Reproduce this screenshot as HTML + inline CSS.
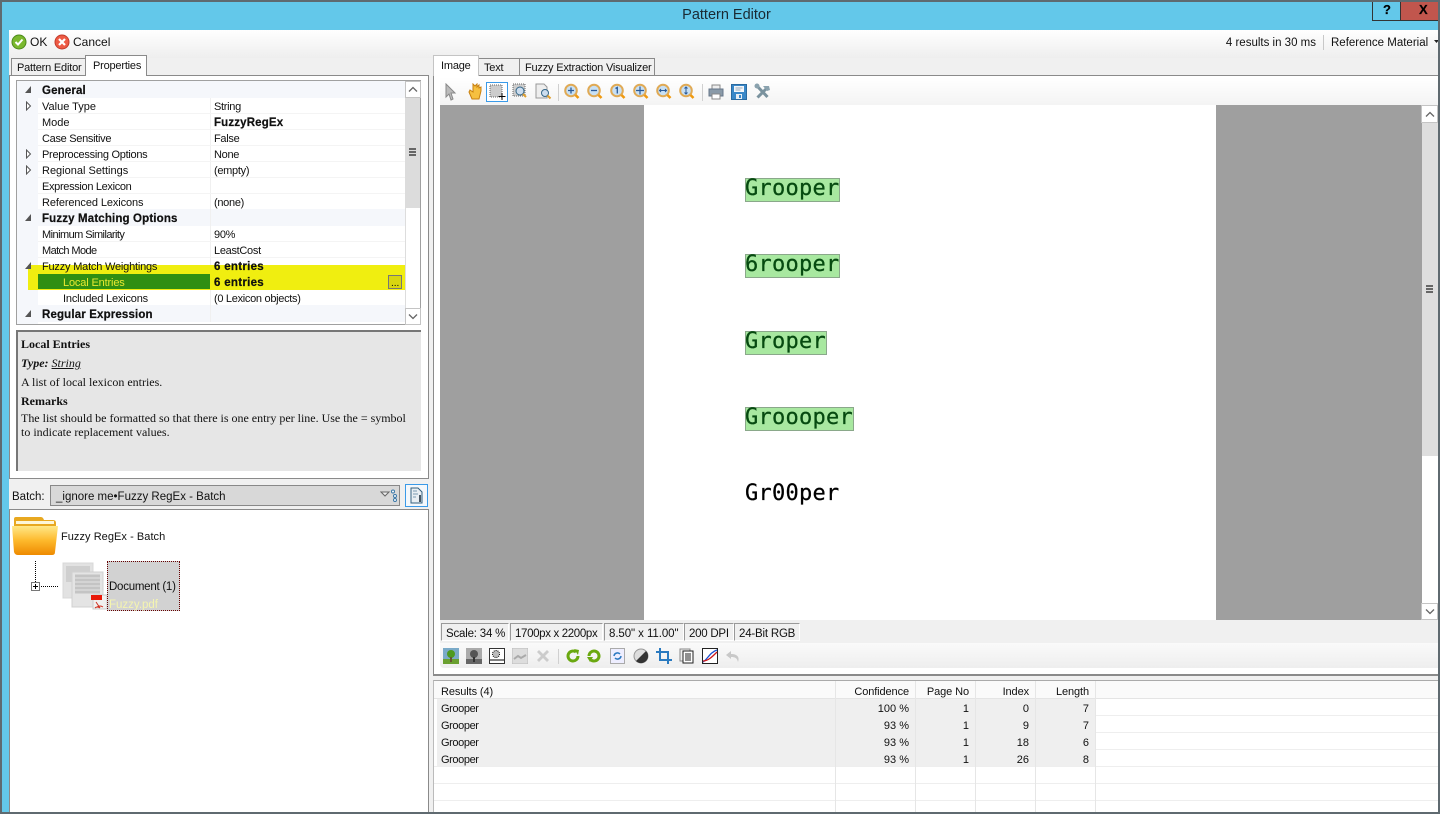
<!DOCTYPE html>
<html><head><meta charset="utf-8"><style>
html,body{margin:0;padding:0;width:1440px;height:814px;overflow:hidden;background:#fff}
body{position:relative;font-family:"Liberation Sans",sans-serif;font-size:11px;color:#111}
.b,.t,svg{position:absolute}
.t{white-space:nowrap;line-height:14px;height:14px}
.r{text-align:right}
.v{letter-spacing:-.3px}
.bd{font-weight:bold;-webkit-text-stroke:.2px #000;letter-spacing:.15px}
.s{font-family:"Liberation Serif",serif;font-size:12px}
.mono{font-family:"DejaVu Sans Mono",monospace;font-size:22px;line-height:26px;height:26px;color:#000;letter-spacing:.25px;-webkit-text-stroke:.25px currentColor}
.hl{color:#064a10}
.sb{height:18px;background:#f0f0f0;border-top:1px solid #999;border-left:1px solid #999;border-right:1px solid #fff;border-bottom:1px solid #fff;box-sizing:border-box}
</style></head><body>
<!-- window frame -->
<div class="b" style="left:0;top:0;width:1440px;height:814px;background:#63c8ea"></div>
<div class="b" style="left:9px;top:30px;width:1429px;height:782px;background:#f0f0f0"></div>
<div class="b" style="left:0;top:0;width:1440px;height:2px;background:#5f6a70"></div>
<div class="b" style="left:0;top:0;width:2px;height:814px;background:#5f6a70"></div>
<div class="t" style="left:0;top:6px;width:1453px;text-align:center;font-size:14.500px;line-height:18px;height:18px;color:#1a2a33">Pattern Editor</div>
<!-- help close -->
<div class="b" style="left:1372px;top:2px;width:28px;height:18px;border-left:1px solid #333;background:#63c8ea;box-sizing:border-box"></div>
<div class="b" style="left:1400px;top:2px;width:38px;height:18px;background:#c1564d;border-left:1px solid #333;box-sizing:border-box"></div>
<div class="b" style="left:1372px;top:20px;width:66px;height:1px;background:#333"></div>
<div class="t bd" style="left:1383px;top:3px;font-size:13px;color:#000">?</div>
<div class="t bd" style="left:1419px;top:3px;font-size:13px;color:#000">X</div>
<!-- toolbar -->
<div class="b" style="left:9px;top:30px;width:1429px;height:28px;background:linear-gradient(#fff,#eee)"></div>
<svg style="left:11px;top:34px" width="16" height="16" viewBox="0 0 16 16"><circle cx="8" cy="8" r="7" fill="#7ab82e" stroke="#4c8a1a"/><path d="M4.500 8l2.500 2.500 4.500-5" stroke="#fff" stroke-width="2" fill="none"/></svg>
<div class="t" style="left:30px;top:35px;font-size:12px">OK</div>
<svg style="left:54px;top:34px" width="16" height="16" viewBox="0 0 16 16"><circle cx="8" cy="8" r="7" fill="#ee5a44" stroke="#c23a2a"/><path d="M5 5l6 6M11 5l-6 6" stroke="#fff" stroke-width="2.200"/></svg>
<div class="t" style="left:73px;top:35px;font-size:12px">Cancel</div>
<div class="t r" style="right:124px;top:36px;font-size:11.500px">4 results in 30 ms</div>
<div class="b" style="left:1323px;top:35px;width:1px;height:15px;background:#c8c8c8"></div>
<div class="t" style="left:1331px;top:36px;font-size:11.500px">Reference Material</div>
<svg style="left:1434px;top:40px" width="5" height="4"><path d="M0 0h5L2.500 3z" fill="#222"/></svg>

<!-- left panel -->
<div class="b" style="left:9px;top:75px;width:420px;height:404px;background:#fff;border:1px solid #8a8a8a;box-sizing:border-box"></div>
<div class="b" style="left:11px;top:58px;width:75px;height:17px;background:#f0f0f0;border:1px solid #8a8a8a;border-bottom:0;box-sizing:border-box"></div>
<div class="t" style="left:17px;top:61px;font-size:11px;letter-spacing:-.2px">Pattern Editor</div>
<div class="b" style="left:85px;top:55px;width:62px;height:21px;background:#fff;border:1px solid #8a8a8a;border-bottom:0;box-sizing:border-box"></div>
<div class="t" style="left:93px;top:59px;font-size:11px;letter-spacing:-.2px">Properties</div>
<!-- property grid -->
<div class="b" style="left:16px;top:80px;width:405px;height:245px;background:#fff;border:1px solid #a0a0a0;box-sizing:border-box"></div>
<div class="b" style="left:17px;top:81px;width:21px;height:243px;background:#f5f7fb"></div>
<div class="b" style="left:17px;top:81px;width:388px;height:17px;background:#f5f7fb"></div>
<div class="b" style="left:17px;top:209px;width:388px;height:17px;background:#f5f7fb"></div>
<div class="b" style="left:17px;top:305px;width:388px;height:17px;background:#f5f7fb"></div>
<div class="b" style="left:210px;top:98px;width:1px;height:224px;background:#f0f0f0"></div>
<div class="b" style="left:38px;top:113px;width:367px;height:1px;background:#f4f4f4"></div>
<div class="b" style="left:38px;top:129px;width:367px;height:1px;background:#f4f4f4"></div>
<div class="b" style="left:38px;top:145px;width:367px;height:1px;background:#f4f4f4"></div>
<div class="b" style="left:38px;top:161px;width:367px;height:1px;background:#f4f4f4"></div>
<div class="b" style="left:38px;top:177px;width:367px;height:1px;background:#f4f4f4"></div>
<div class="b" style="left:38px;top:193px;width:367px;height:1px;background:#f4f4f4"></div>
<div class="b" style="left:38px;top:241px;width:367px;height:1px;background:#f4f4f4"></div>
<div class="b" style="left:38px;top:257px;width:367px;height:1px;background:#f4f4f4"></div>
<!-- yellow highlight -->
<div class="b" style="left:28px;top:265px;width:381px;height:25px;background:#f0ee10"></div>
<div class="b" style="left:38px;top:274px;width:172px;height:15px;background:#308f12"></div>
<div class="b" style="left:388px;top:275px;width:14px;height:14px;background:#d8d610;border:1px solid #777;box-sizing:border-box"></div>
<div class="t" style="left:391px;top:277px;font-size:10px;color:#000">...</div>
<!-- prop text -->
<div class="b" style="left:0;top:1px">
<div class="t bd" style="left:42px;top:83px;font-size:11.500px">General</div>
<div class="t" style="left:42px;top:99px">Value Type</div><div class="t v" style="left:214px;top:99px">String</div>
<div class="t" style="left:42px;top:115px">Mode</div><div class="t bd" style="left:214px;top:115px;font-size:11.500px">FuzzyRegEx</div>
<div class="t" style="left:42px;top:131px;letter-spacing:-.3px">Case Sensitive</div><div class="t v" style="left:214px;top:131px">False</div>
<div class="t" style="left:42px;top:147px;letter-spacing:-.28px">Preprocessing Options</div><div class="t v" style="left:214px;top:147px">None</div>
<div class="t" style="left:42px;top:163px">Regional Settings</div><div class="t v" style="left:214px;top:163px">(empty)</div>
<div class="t" style="left:42px;top:179px;letter-spacing:-.33px">Expression Lexicon</div>
<div class="t" style="left:42px;top:195px;letter-spacing:-.1px">Referenced Lexicons</div><div class="t v" style="left:214px;top:195px">(none)</div>
<div class="t bd" style="left:42px;top:211px;font-size:11.500px">Fuzzy Matching Options</div>
<div class="t" style="left:42px;top:227px;letter-spacing:-.55px">Minimum Similarity</div><div class="t v" style="left:214px;top:227px">90%</div>
<div class="t" style="left:42px;top:243px;letter-spacing:-.6px">Match Mode</div><div class="t v" style="left:214px;top:243px">LeastCost</div>
<div class="t" style="left:42px;top:259px;letter-spacing:-.2px">Fuzzy Match Weightings</div><div class="t bd" style="left:214px;top:259px;font-size:11.500px;letter-spacing:.3px">6 entries</div>
<div class="t" style="left:63px;top:275px;color:#e8e830;letter-spacing:-.15px">Local Entries</div><div class="t bd" style="left:214px;top:275px;font-size:11.500px;letter-spacing:.3px">6 entries</div>
<div class="t" style="left:63px;top:291px;letter-spacing:-.18px">Included Lexicons</div><div class="t v" style="left:214px;top:291px">(0 Lexicon objects)</div>
<div class="t bd" style="left:42px;top:307px;font-size:11.500px">Regular Expression</div>
</div>
<!-- arrows -->
<svg style="left:24px;top:85px" width="10" height="10"><path d="M7 1v7H1z" fill="#555"/></svg>
<svg style="left:24px;top:213px" width="10" height="10"><path d="M7 1v7H1z" fill="#555"/></svg>
<svg style="left:24px;top:261px" width="10" height="10"><path d="M7 1v7H1z" fill="#555"/></svg>
<svg style="left:24px;top:309px" width="10" height="10"><path d="M7 1v7H1z" fill="#555"/></svg>
<svg style="left:25px;top:101px" width="8" height="10"><path d="M1.500 1l4 4-4 4z" fill="#fff" stroke="#555"/></svg>
<svg style="left:25px;top:149px" width="8" height="10"><path d="M1.500 1l4 4-4 4z" fill="#fff" stroke="#555"/></svg>
<svg style="left:25px;top:165px" width="8" height="10"><path d="M1.500 1l4 4-4 4z" fill="#fff" stroke="#555"/></svg>
<!-- grid scrollbar -->
<div class="b" style="left:405px;top:81px;width:15px;height:243px;background:#fff;border-left:1px solid #ddd;box-sizing:border-box"></div>
<div class="b" style="left:405px;top:98px;width:15px;height:110px;background:#dcdcdc"></div>
<div class="b" style="left:405px;top:81px;width:16px;height:17px;background:#fff;border:1px solid #c4c4c4;box-sizing:border-box"></div>
<div class="b" style="left:405px;top:308px;width:16px;height:17px;background:#fff;border:1px solid #c4c4c4;box-sizing:border-box"></div>
<svg style="left:408px;top:86px" width="10" height="7"><path d="M1 5.500l4-4 4 4" fill="none" stroke="#666" stroke-width="1.300"/></svg>
<svg style="left:408px;top:313px" width="10" height="7"><path d="M1 1.500l4 4 4-4" fill="none" stroke="#666" stroke-width="1.300"/></svg>
<div class="b" style="left:409px;top:148px;width:7px;height:1.500px;background:#666;box-shadow:0 3px 0 #666,0 6px 0 #666"></div>
<!-- description -->
<div class="b" style="left:16px;top:330px;width:405px;height:141px;background:#e6e6e6;border-top:2px solid #777;border-left:2px solid #777;box-sizing:border-box"></div>
<div class="t s" style="left:21px;top:337px;font-weight:bold">Local Entries</div>
<div class="t s" style="left:21px;top:356px"><b><i>Type:</i></b> <i><u>String</u></i></div>
<div class="t s" style="left:21px;top:375px">A list of local lexicon entries.</div>
<div class="t s" style="left:21px;top:394px;font-weight:bold">Remarks</div>
<div class="t s" style="left:21px;top:411px;letter-spacing:-.01px">The list should be formatted so that there is one entry per line. Use the = symbol</div>
<div class="t s" style="left:21px;top:425px">to indicate replacement values.</div>
<!-- batch row -->
<div class="t" style="left:12px;top:490px;font-size:11.500px">Batch:</div>
<div class="b" style="left:50px;top:485px;width:350px;height:21px;background:#d8d8d8;border:1px solid #888;box-sizing:border-box"></div>
<div class="t" style="left:56px;top:490px;font-size:11.500px">_ignore me•Fuzzy RegEx - Batch</div>
<svg style="left:380px;top:489px" width="18" height="14"><path d="M1 3h8L5 7z" fill="#eee" stroke="#666"/><circle cx="13" cy="2.500" r="1.500" fill="#fff" stroke="#3a78a8"/><circle cx="15" cy="7" r="1.500" fill="#fff" stroke="#3a78a8"/><circle cx="15" cy="11" r="1.500" fill="#fff" stroke="#3a78a8"/></svg>
<div class="b" style="left:405px;top:484px;width:23px;height:23px;background:#f4f8fc;border:1px solid #3a9ae8;box-sizing:border-box"></div>
<svg style="left:409px;top:487px" width="15" height="17"><path d="M2 1h7l4 4v11H2z" fill="#e8eef2" stroke="#34607e"/><path d="M4 4h4M4 7h5M4 10h3" stroke="#7a9ab0"/><path d="M11 8v7" stroke="#123" stroke-width="1.500"/></svg>
<!-- tree -->
<div class="b" style="left:9px;top:509px;width:420px;height:303px;background:#fff;border:1px solid #8a8a8a;border-bottom:0;box-sizing:border-box"></div>
<svg style="left:11px;top:515px" width="48" height="42" viewBox="0 0 48 42"><defs><linearGradient id="f" x1="0" y1="0" x2="0" y2="1"><stop offset="0" stop-color="#ffe888"/><stop offset=".5" stop-color="#fdb92c"/><stop offset="1" stop-color="#ee8a00"/></linearGradient></defs><path d="M3 4q0-2 2-2h25q2 0 3 3h9q3 0 3 3v10H3z" fill="#e8a820"/><rect x="5" y="6" width="38" height="3" fill="#fdf6d8"/><path d="M1 11h46l-3 26q0 3-3 3H7q-3 0-4-3z" fill="url(#f)"/></svg>
<div class="t" style="left:61px;top:530px;letter-spacing:.05px">Fuzzy RegEx - Batch</div>
<div class="b" style="left:35px;top:561px;height:21px;border-left:1px dotted #000"></div>
<div class="b" style="left:31px;top:582px;width:9px;height:9px;background:#fff;border:1px solid #777;box-sizing:border-box"></div>
<svg style="left:31px;top:582px" width="9" height="9"><path d="M2 4.500h5M4.500 2v5" stroke="#000"/></svg>
<div class="b" style="left:41px;top:586px;width:17px;border-top:1px dotted #000"></div>
<svg style="left:62px;top:562px" width="46" height="48"><rect x="1" y="1" width="30" height="35" fill="#e2e2e2" stroke="#d8d8d8"/><rect x="4" y="4" width="24" height="16" fill="#cfcfcf"/><rect x="10" y="10" width="31" height="35" fill="#e4e4e4" stroke="#d0d0d0"/><path d="M13 14h25M13 18h25M13 22h25M13 26h25M13 30h25" stroke="#c4c4c4" stroke-width="3"/><rect x="31" y="33" width="14" height="14" fill="#f0f0f0" stroke="#ccc"/><rect x="29" y="33" width="11" height="5" fill="#e81808"/><path d="M34 40q2 3 4 6M38 46q-3-2-5 0M35 45q3-2 6 0" stroke="#d03020" fill="none"/></svg>
<div class="b" style="left:107px;top:561px;width:73px;height:50px;background:#d2d2d2;border:1px dotted #600;box-sizing:border-box"></div>
<div class="t" style="left:109px;top:580px;font-size:11.500px;letter-spacing:-.25px">Document (1)</div>
<div class="t" style="left:109px;top:598px;font-size:11.500px;color:#f4f4b0">Fuzzy.pdf</div>

<!-- right panel -->
<div class="b" style="left:433px;top:75px;width:1005px;height:601px;background:#fff;border-top:1px solid #8a8a8a;border-left:1px solid #8a8a8a;border-bottom:2px solid #8a8a8a;box-sizing:border-box"></div>
<div class="b" style="left:478px;top:58px;width:42px;height:17px;background:#f0f0f0;border:1px solid #8a8a8a;border-bottom:0;box-sizing:border-box"></div>
<div class="b" style="left:519px;top:58px;width:136px;height:17px;background:#f0f0f0;border:1px solid #8a8a8a;border-bottom:0;box-sizing:border-box"></div>
<div class="b" style="left:433px;top:55px;width:46px;height:21px;background:#fff;border:1px solid #c4c4c4;border-bottom:0;box-sizing:border-box"></div>
<div class="t" style="left:441px;top:59px;font-size:11px;letter-spacing:-.2px">Image</div>
<div class="t" style="left:484px;top:61px;font-size:11px;letter-spacing:-.2px">Text</div>
<div class="t" style="left:525px;top:61px;font-size:11px;letter-spacing:-.2px">Fuzzy Extraction Visualizer</div>
<!-- image toolbar -->
<div class="b" style="left:440px;top:77px;width:998px;height:28px;background:linear-gradient(#fff,#f4f4f4)"></div>
<svg style="left:444px;top:83px" width="14" height="18"><path d="M2 1l9 9H7l2 6-2 1-2-6-3 3z" fill="#bbb" stroke="#888"/></svg>
<svg style="left:467px;top:83px" width="15" height="18"><path d="M2 9l3 7h7l2-8V4l-2 1V2l-2 2V1L8 3 6 1v8L3 7z" fill="#f6c040" stroke="#c88010"/></svg>
<div class="b" style="left:486px;top:82px;width:22px;height:20px;background:#fff;border:1px solid #3a9ae8;box-sizing:border-box"></div>
<svg style="left:489px;top:84px" width="18" height="17"><rect x="1" y="1" width="12" height="12" fill="#ccc" stroke="#666" stroke-dasharray="1 1"/><path d="M13 9v7M9.500 12.500h7" stroke="#000"/></svg>
<svg style="left:512px;top:83px" width="18" height="17"><rect x="1" y="1" width="12" height="12" fill="#ccc" stroke="#666" stroke-dasharray="1 1"/><circle cx="8" cy="8" r="4" fill="#cde" stroke="#368"/><path d="M11 11l3 3" stroke="#e0a030" stroke-width="2"/></svg>
<svg style="left:535px;top:83px" width="18" height="17"><path d="M1 1h8l3 3v11H1z" fill="#eee" stroke="#999"/><circle cx="10" cy="10" r="3.500" fill="#cde" stroke="#368"/><path d="M12.500 12.500l3 3" stroke="#e0a030" stroke-width="2"/></svg>
<div class="b" style="left:558px;top:84px;width:1px;height:17px;background:#d0d0d0"></div>
<svg style="left:564px;top:83px" width="17" height="17"><circle cx="7" cy="7.500" r="5.800" fill="#c8e0f4" stroke="#e0aa55" stroke-width="2"/><path d="M11.500 12l3 3" stroke="#f09a10" stroke-width="2.600"/><path d="M4 7.500h6M7 4.500v6" stroke="#2a5a98" stroke-width="1.300"/></svg>
<svg style="left:587px;top:83px" width="17" height="17"><circle cx="7" cy="7.500" r="5.800" fill="#c8e0f4" stroke="#e0aa55" stroke-width="2"/><path d="M11.500 12l3 3" stroke="#f09a10" stroke-width="2.600"/><path d="M4 7.500h6" stroke="#2a5a98" stroke-width="1.300"/></svg>
<svg style="left:610px;top:83px" width="17" height="17"><circle cx="7" cy="7.500" r="5.800" fill="#c8e0f4" stroke="#e0aa55" stroke-width="2"/><path d="M11.500 12l3 3" stroke="#f09a10" stroke-width="2.600"/><path d="M5.500 5.500l1.800-1v6" stroke="#2a5a98" stroke-width="1.300" fill="none"/></svg>
<svg style="left:633px;top:83px" width="17" height="17"><circle cx="7" cy="7.500" r="5.800" fill="#c8e0f4" stroke="#e0aa55" stroke-width="2"/><path d="M11.500 12l3 3" stroke="#f09a10" stroke-width="2.600"/><path d="M3 7.500h8M7 3.500v8" stroke="#2a5a98" stroke-width="1.200"/></svg>
<svg style="left:656px;top:83px" width="17" height="17"><circle cx="7" cy="7.500" r="5.800" fill="#c8e0f4" stroke="#e0aa55" stroke-width="2"/><path d="M11.500 12l3 3" stroke="#f09a10" stroke-width="2.600"/><path d="M3.500 7.500h7M5 6L3.500 7.500 5 9M9 6l1.500 1.500L9 9" stroke="#2a5a98" fill="none"/></svg>
<svg style="left:679px;top:83px" width="17" height="17"><circle cx="7" cy="7.500" r="5.800" fill="#c8e0f4" stroke="#e0aa55" stroke-width="2"/><path d="M11.500 12l3 3" stroke="#f09a10" stroke-width="2.600"/><path d="M7 4v7M5.500 5.500L7 4l1.500 1.500M5.500 9.500L7 11l1.500-1.500" stroke="#2a5a98" fill="none"/></svg>
<div class="b" style="left:702px;top:84px;width:1px;height:17px;background:#d0d0d0"></div>
<svg style="left:708px;top:84px" width="16" height="16"><rect x="4" y="1" width="8" height="5" fill="#eee" stroke="#888"/><rect x="1" y="5" width="14" height="7" fill="#8a9aa8" stroke="#67778a"/><rect x="4" y="10" width="8" height="5" fill="#fff" stroke="#888"/></svg>
<svg style="left:731px;top:84px" width="16" height="16"><rect x=".5" y=".5" width="15" height="15" fill="#3a88c8" stroke="#2a6aa0"/><rect x="3" y="2" width="10" height="6" fill="#f2f6fa"/><path d="M4.500 4h7M4.500 6h5" stroke="#9ab"/><rect x="5" y="10" width="6" height="5" fill="#e8eef4"/><rect x="8" y="11" width="2" height="3" fill="#3a88c8"/></svg>
<svg style="left:754px;top:83px" width="17" height="17"><path d="M3.500 14.500L12 6M3.500 3.500l10 10.500" stroke="#7a929e" stroke-width="3"/><path d="M9 3h6l1 4-3 1z" fill="#8aa2ae"/><circle cx="3" cy="3" r="2.500" fill="#8aa2ae"/></svg>
<!-- image view -->
<div class="b" style="left:440px;top:105px;width:982px;height:515px;background:#9f9f9f"></div>
<div class="b" style="left:644px;top:105px;width:572px;height:515px;background:#fff"></div>
<div class="b" style="left:745px;top:178px;width:95px;height:24px;background:#a8e8a0;border:1px solid #8aa88a;box-sizing:border-box"></div>
<div class="b" style="left:745px;top:254px;width:95px;height:24px;background:#a8e8a0;border:1px solid #8aa88a;box-sizing:border-box"></div>
<div class="b" style="left:745px;top:331px;width:82px;height:24px;background:#a8e8a0;border:1px solid #8aa88a;box-sizing:border-box"></div>
<div class="b" style="left:745px;top:407px;width:109px;height:24px;background:#a8e8a0;border:1px solid #8aa88a;box-sizing:border-box"></div>
<div class="t mono hl" style="left:745px;top:176px">Grooper</div>
<div class="t mono hl" style="left:745px;top:252px">6rooper</div>
<div class="t mono hl" style="left:745px;top:329px">Groper</div>
<div class="t mono hl" style="left:745px;top:405px">Groooper</div>
<div class="t mono" style="left:745px;top:481px">Gr00per</div>
<!-- right scrollbar -->
<div class="b" style="left:1422px;top:105px;width:16px;height:515px;background:#fff"></div>
<div class="b" style="left:1422px;top:122px;width:16px;height:334px;background:#dedede"></div>
<div class="b" style="left:1421px;top:105px;width:17px;height:18px;background:#fff;border:1px solid #c4c4c4;box-sizing:border-box"></div>
<div class="b" style="left:1421px;top:603px;width:17px;height:17px;background:#fff;border:1px solid #c4c4c4;box-sizing:border-box"></div>
<svg style="left:1425px;top:111px" width="10" height="7"><path d="M1 5.500l4-4 4 4" fill="none" stroke="#666" stroke-width="1.300"/></svg>
<svg style="left:1425px;top:608px" width="10" height="7"><path d="M1 1.500l4 4 4-4" fill="none" stroke="#666" stroke-width="1.300"/></svg>
<div class="b" style="left:1426px;top:285px;width:7px;height:1.500px;background:#666;box-shadow:0 3px 0 #666,0 6px 0 #666"></div>
<!-- status -->
<div class="b" style="left:440px;top:620px;width:998px;height:23px;background:#f0f0f0"></div>
<div class="b sb" style="left:441px;top:623px;width:68px"></div>
<div class="b sb" style="left:510px;top:623px;width:93px"></div>
<div class="b sb" style="left:604px;top:623px;width:80px"></div>
<div class="b sb" style="left:684px;top:623px;width:50px"></div>
<div class="b sb" style="left:734px;top:623px;width:66px"></div>
<div class="t" style="left:446px;top:627px;font-size:11.500px;letter-spacing:-.2px">Scale: 34 %</div>
<div class="t" style="left:515px;top:627px;font-size:11.500px;letter-spacing:-.35px">1700px x 2200px</div>
<div class="t" style="left:609px;top:627px;font-size:11.500px;letter-spacing:-.08px">8.50" x 11.00"</div>
<div class="t" style="left:689px;top:627px;font-size:11.500px;letter-spacing:-.25px">200 DPI</div>
<div class="t" style="left:739px;top:627px;font-size:11.500px;letter-spacing:-.2px">24-Bit RGB</div>
<!-- lower toolbar -->
<div class="b" style="left:440px;top:643px;width:998px;height:25px;background:linear-gradient(#fafafa,#eee);border-radius:0 0 0 4px"></div>
<svg style="left:443px;top:648px" width="16" height="16"><rect width="16" height="16" fill="#7aaac8"/><rect y="11" width="16" height="5" fill="#6aa030"/><circle cx="8" cy="6" r="4" fill="#4e9a20"/><rect x="7" y="9" width="2" height="5" fill="#653"/></svg>
<svg style="left:466px;top:648px" width="16" height="16"><rect width="16" height="16" fill="#aaa"/><rect y="11" width="16" height="5" fill="#666"/><circle cx="8" cy="6" r="4" fill="#555"/><rect x="7" y="9" width="2" height="5" fill="#333"/></svg>
<svg style="left:489px;top:648px" width="16" height="16"><rect x=".5" y=".5" width="15" height="15" fill="#fff" stroke="#333"/><circle cx="7" cy="6" r="3.500" fill="#bbb" stroke="#000" stroke-dasharray="1 1"/><path d="M1 12h14" stroke="#000"/></svg>
<svg style="left:512px;top:648px" width="16" height="16"><rect width="16" height="16" fill="#ddd" stroke="#bbb"/><path d="M2 11l4-3 3 2 5-3" stroke="#aaa" stroke-width="2" fill="none"/></svg>
<svg style="left:535px;top:648px" width="16" height="16"><path d="M2 4l2-2 4 4 4-4 2 2-4 4 4 4-2 2-4-4-4 4-2-2 4-4z" fill="#ccc"/></svg>
<div class="b" style="left:558px;top:649px;width:1px;height:15px;background:#d0d0d0"></div>
<svg style="left:565px;top:648px" width="16" height="16"><path d="M13 8a5 5 0 1 1-2-4" fill="none" stroke="#6aa810" stroke-width="3"/><path d="M9 1l5 1-1 5z" fill="#6aa810"/></svg>
<svg style="left:586px;top:648px" width="16" height="16"><path d="M3 8a5 5 0 1 1 2 4" fill="none" stroke="#6aa810" stroke-width="3"/><path d="M1 9h6l-3 5z" fill="#6aa810"/></svg>
<svg style="left:610px;top:648px" width="15" height="16"><rect x=".5" y=".5" width="14" height="15" fill="#eef" stroke="#aaa"/><path d="M4 8a3.500 3.500 0 0 1 6-2M11 8a3.500 3.500 0 0 1-6 2" stroke="#2a78c0" stroke-width="1.500" fill="none"/></svg>
<svg style="left:633px;top:648px" width="16" height="16"><circle cx="8" cy="8" r="7" fill="#ddd" stroke="#999"/><path d="M13 3A7 7 0 0 1 3 13z" fill="#333"/></svg>
<svg style="left:656px;top:648px" width="16" height="16"><path d="M4 0v12h12M0 4h12v12" fill="none" stroke="#2a7ac0" stroke-width="2"/></svg>
<svg style="left:679px;top:648px" width="16" height="16"><rect x="1" y="1" width="10" height="12" fill="#eee" stroke="#888"/><rect x="4" y="3" width="10" height="12" fill="#fff" stroke="#222"/><path d="M6 6h6M6 8h6M6 10h6M6 12h6" stroke="#222"/></svg>
<svg style="left:702px;top:648px" width="16" height="16"><rect x=".5" y=".5" width="15" height="15" fill="#fff" stroke="#222"/><path d="M1 14C5 12 8 4 15 2" stroke="#1a50d0" fill="none" stroke-width="1.300"/><path d="M1 13C6 13 10 9 15 4" stroke="#d01818" fill="none" stroke-width="1.300"/></svg>
<svg style="left:725px;top:650px" width="16" height="13"><path d="M6 1L1 5l5 4V7c4 0 6 1 7 5 2-5-1-8-7-8z" fill="#c8c8c8"/></svg>
<!-- results -->
<div class="b" style="left:433px;top:680px;width:1005px;height:132px;background:#fff;border-top:1px solid #aaa;border-left:1px solid #bbb;box-sizing:border-box"></div>
<div class="b" style="left:434px;top:681px;width:1004px;height:17px;background:#fafafa"></div>
<div class="b" style="left:437px;top:699px;width:658px;height:68px;background:#efefef"></div>
<div class="b" style="left:434px;top:698px;width:1004px;height:1px;background:#e4e4e4"></div>
<div class="b" style="left:1095px;top:715px;width:343px;height:1px;background:#eee"></div>
<div class="b" style="left:1095px;top:732px;width:343px;height:1px;background:#eee"></div>
<div class="b" style="left:1095px;top:749px;width:343px;height:1px;background:#eee"></div>
<div class="b" style="left:434px;top:766px;width:1004px;height:1px;background:#eee"></div>
<div class="b" style="left:434px;top:783px;width:1004px;height:1px;background:#eee"></div>
<div class="b" style="left:434px;top:800px;width:1004px;height:1px;background:#eee"></div>
<div class="b" style="left:835px;top:681px;width:1px;height:131px;background:#e6e6e6"></div>
<div class="b" style="left:915px;top:681px;width:1px;height:131px;background:#e6e6e6"></div>
<div class="b" style="left:975px;top:681px;width:1px;height:131px;background:#e6e6e6"></div>
<div class="b" style="left:1035px;top:681px;width:1px;height:131px;background:#e6e6e6"></div>
<div class="b" style="left:1095px;top:681px;width:1px;height:131px;background:#e6e6e6"></div>
<div class="t" style="left:441px;top:685px;letter-spacing:-.1px">Results (4)</div>
<div class="t r" style="right:531px;top:685px;letter-spacing:-.1px">Confidence</div>
<div class="t r" style="right:471px;top:685px;letter-spacing:-.1px">Page No</div>
<div class="t r" style="right:411px;top:685px;letter-spacing:-.1px">Index</div>
<div class="t r" style="right:351px;top:685px;letter-spacing:-.1px">Length</div>
<div class="t v" style="left:441px;top:702px;letter-spacing:-.4px">Grooper</div><div class="t r" style="right:531px;top:702px">100 %</div><div class="t r" style="right:471px;top:702px">1</div><div class="t r" style="right:411px;top:702px">0</div><div class="t r" style="right:351px;top:702px">7</div>
<div class="t v" style="left:441px;top:719px;letter-spacing:-.4px">Grooper</div><div class="t r" style="right:531px;top:719px">93 %</div><div class="t r" style="right:471px;top:719px">1</div><div class="t r" style="right:411px;top:719px">9</div><div class="t r" style="right:351px;top:719px">7</div>
<div class="t v" style="left:441px;top:736px;letter-spacing:-.4px">Grooper</div><div class="t r" style="right:531px;top:736px">93 %</div><div class="t r" style="right:471px;top:736px">1</div><div class="t r" style="right:411px;top:736px">18</div><div class="t r" style="right:351px;top:736px">6</div>
<div class="t v" style="left:441px;top:753px;letter-spacing:-.4px">Grooper</div><div class="t r" style="right:531px;top:753px">93 %</div><div class="t r" style="right:471px;top:753px">1</div><div class="t r" style="right:411px;top:753px">26</div><div class="t r" style="right:351px;top:753px">8</div>
<div class="b" style="left:0;top:812px;width:1440px;height:2px;background:#5f6a70"></div>
<div class="b" style="left:1438px;top:0;width:2px;height:814px;background:#5f6a70"></div>
</body></html>
